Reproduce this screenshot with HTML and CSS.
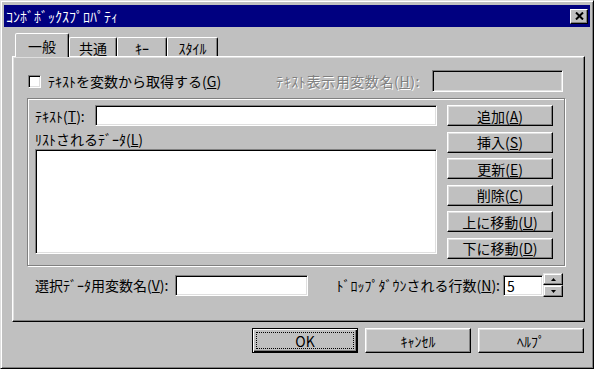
FILE: index.html
```html
<!DOCTYPE html>
<html lang="ja">
<head>
    <meta charset="UTF-8">
    <title>ｺﾝﾎﾞﾎﾞｯｸｽﾌﾟﾛﾊﾟﾃｨ</title>
    <link rel="stylesheet" href="styles.css">
</head>
<body>
    <div class="dialog">
        <div class="titlebar">
            <span class="title">ｺﾝﾎﾞﾎﾞｯｸｽﾌﾟﾛﾊﾟﾃｨ</span>
            <span class="close">
                <svg width="9" height="8" viewBox="0 0 9 8"><path d="M1 0.5 L8 7.5 M8 0.5 L1 7.5" stroke="#000" stroke-width="2" fill="none"/></svg>
            </span>
        </div>

        <div class="sheet">
            <div class="tabs">
                <div class="tab active tab-general">一般</div>
                <div class="tab tab-common">共通</div>
                <div class="tab tab-key">ｷｰ</div>
                <div class="tab tab-style">ｽﾀｲﾙ</div>
            </div>

            <div class="panel">
                <div class="top-row">
                    <span class="check"></span>
                    <span class="label">ﾃｷｽﾄを変数から取得する(<u>G</u>)</span>
                    <span class="label disabled">ﾃｷｽﾄ表示用変数名(<u>H</u>):</span>
                    <span class="edit edit-disabled"></span>
                </div>

                <div class="group">
                    <div class="fields">
                        <div class="text-row">
                            <span class="label text-label">ﾃｷｽﾄ(<u>T</u>):</span>
                            <span class="edit text-edit"></span>
                        </div>
                        <div class="label list-label">ﾘｽﾄされるﾃﾞｰﾀ(<u>L</u>)</div>
                        <div class="listbox"></div>
                    </div>
                    <div class="side-buttons">
                        <div class="btn">追加(<u>A</u>)</div>
                        <div class="btn">挿入(<u>S</u>)</div>
                        <div class="btn">更新(<u>E</u>)</div>
                        <div class="btn">削除(<u>C</u>)</div>
                        <div class="btn">上に移動(<u>U</u>)</div>
                        <div class="btn">下に移動(<u>D</u>)</div>
                    </div>
                </div>

                <div class="bottom-row">
                    <span class="label select-label">選択ﾃﾞｰﾀ用変数名(<u>V</u>):</span>
                    <span class="edit select-edit"></span>
                    <span class="label rows-label">ﾄﾞﾛｯﾌﾟﾀﾞｳﾝされる行数(<u>N</u>):</span>
                    <span class="edit rows-edit">5</span>
                    <span class="spinner">
                        <span class="spin-btn"><svg width="5" height="3" viewBox="0 0 5 3"><path d="M2.5 0 L5 3 H0 Z" fill="#000"/></svg></span>
                        <span class="spin-btn"><svg width="5" height="3" viewBox="0 0 5 3"><path d="M0 0 H5 L2.5 3 Z" fill="#000"/></svg></span>
                    </span>
                </div>
            </div>
        </div>

        <div class="actions">
            <div class="btn btn-default"><span class="focus">OK</span></div>
            <div class="btn">ｷｬﾝｾﾙ</div>
            <div class="btn">ﾍﾙﾌﾟ</div>
        </div>
    </div>
</body>
</html>
```

FILE: styles.css
```css
body {
    margin: 0;
    background-color: #ffffff;
    font-family: "Noto Sans CJK JP", "Noto Sans", sans-serif;
    font-size: 14px;
    line-height: 16px;
    color: #000000;
}
u {
    text-underline-offset: 1px;
}
.dialog {
    width: 594px;
    height: 369px;
    box-sizing: border-box;
    background-color: #c0c0c0;
    border: 1px solid;
    border-color: #dfdfdf #000000 #000000 #dfdfdf;
    box-shadow: inset 1px 1px #ffffff, inset -1px -1px #808080;
    padding: 4px 3px 0 3px;
}
.titlebar {
    height: 22px;
    background-color: #000080;
    color: #ffffff;
    display: flex;
    align-items: center;
    padding-left: 2px;
}
.close {
    margin-left: auto;
    margin-right: 2px;
    width: 18px;
    height: 15px;
    box-sizing: border-box;
    background-color: #c0c0c0;
    border: 1px solid;
    border-color: #ffffff #000000 #000000 #ffffff;
    box-shadow: inset -1px -1px #808080;
    display: flex;
    align-items: center;
    justify-content: center;
}
.sheet {
    margin: 6px 5px 0 8px;
}
.tabs {
    display: flex;
    align-items: flex-end;
    height: 23px;
    padding-left: 3px;
}
.tab {
    height: 19px;
    box-sizing: border-box;
    border: 1px solid;
    border-bottom: none;
    border-color: #ffffff #000000 transparent #ffffff;
    border-radius: 2px 2px 0 0;
    box-shadow: inset -1px 0 #808080;
    display: flex;
    align-items: center;
    justify-content: center;
    padding-top: 2px;
}
.tab.active {
    height: 24px;
    margin-bottom: -1px;
    position: relative;
    z-index: 1;
    background-color: #c0c0c0;
    padding-top: 0;
}
.tab-general { width: 54px; }
.tab-common { width: 48px; }
.tab-key { width: 50px; }
.tab-style { width: 51px; }
.panel {
    height: 266px;
    box-sizing: border-box;
    border: 1px solid;
    border-color: #ffffff #000000 #000000 #ffffff;
    box-shadow: inset -1px -1px #808080, inset 1px 1px #dfdfdf;
    padding: 13px 19px 0 14px;
}
.top-row {
    display: flex;
    align-items: center;
    height: 22px;
}
.check {
    width: 13px;
    height: 13px;
    box-sizing: border-box;
    margin-left: 1px;
    margin-right: 7px;
    background-color: #ffffff;
    border: 1px solid;
    border-color: #808080 #ffffff #ffffff #808080;
    box-shadow: inset 1px 1px #000000, inset -1px -1px #dfdfdf;
}
.label {
    white-space: nowrap;
}
.label.disabled {
    margin-left: auto;
    margin-right: 12px;
    letter-spacing: 0.6px;
    color: #808080;
    text-shadow: 1px 1px #ffffff;
}
.edit {
    display: block;
    box-sizing: border-box;
    height: 21px;
    background-color: #ffffff;
    border: 1px solid;
    border-color: #808080 #ffffff #ffffff #808080;
    box-shadow: inset 1px 1px #000000, inset -1px -1px #dfdfdf;
}
.edit-disabled {
    width: 131px;
    height: 22px;
    margin-right: 2px;
    background-color: #c0c0c0;
}
.group {
    margin-top: 6px;
    height: 168px;
    box-sizing: border-box;
    border: 1px solid #808080;
    box-shadow: inset 1px 1px #ffffff, 1px 1px #ffffff;
    padding: 6px 11px 0 7px;
    display: flex;
    gap: 10px;
}
.fields {
    width: 402px;
    display: flex;
    flex-direction: column;
}
.text-row {
    display: flex;
    align-items: center;
    height: 21px;
}
.text-label {
    width: 60px;
}
.text-edit {
    flex: 1;
}
.list-label {
    height: 23px;
    box-sizing: border-box;
    padding-top: 5px;
}
.listbox {
    height: 105px;
    box-sizing: border-box;
    background-color: #ffffff;
    border: 1px solid;
    border-color: #808080 #ffffff #ffffff #808080;
    box-shadow: inset 1px 1px #000000, inset -1px -1px #dfdfdf;
}
.side-buttons {
    width: 106px;
    display: flex;
    flex-direction: column;
    gap: 5.6px;
}
.btn {
    height: 21px;
    box-sizing: border-box;
    background-color: #c0c0c0;
    border: 1px solid;
    border-color: #ffffff #000000 #000000 #ffffff;
    box-shadow: inset -1px -1px #808080, inset 1px 1px #dfdfdf;
    display: flex;
    align-items: center;
    justify-content: center;
    white-space: nowrap;
}
.bottom-row {
    margin-top: 7px;
    height: 24px;
    padding-left: 8px;
    display: flex;
    align-items: center;
}
.select-label {
    width: 140px;
}
.select-edit {
    width: 133px;
}
.rows-label {
    margin-left: auto;
    margin-right: 3px;
}
.rows-edit {
    width: 40px;
    padding: 2px 0 0 3px;
}
.spinner {
    width: 20px;
    height: 24px;
    margin-right: 2px;
    display: flex;
    flex-direction: column;
}
.spin-btn {
    flex: 1;
    box-sizing: border-box;
    background-color: #c0c0c0;
    border: 1px solid;
    border-color: #dfdfdf #000000 #000000 #dfdfdf;
    box-shadow: inset -1px -1px #808080, inset 1px 1px #ffffff;
    display: flex;
    align-items: center;
    justify-content: center;
}
.actions {
    margin-top: 6px;
    padding-right: 6px;
    display: flex;
    justify-content: flex-end;
    gap: 7px;
}
.actions .btn {
    width: 106px;
    height: 25px;
}
.actions .btn-default {
    border-color: #000000;
    box-shadow: inset 1px 1px #ffffff, inset -1px -1px #000000, inset -2px -2px #808080;
    padding: 3px;
}
.focus {
    flex: 1;
    align-self: stretch;
    border: 1px dotted #000000;
    display: flex;
    align-items: center;
    justify-content: center;
}
```
